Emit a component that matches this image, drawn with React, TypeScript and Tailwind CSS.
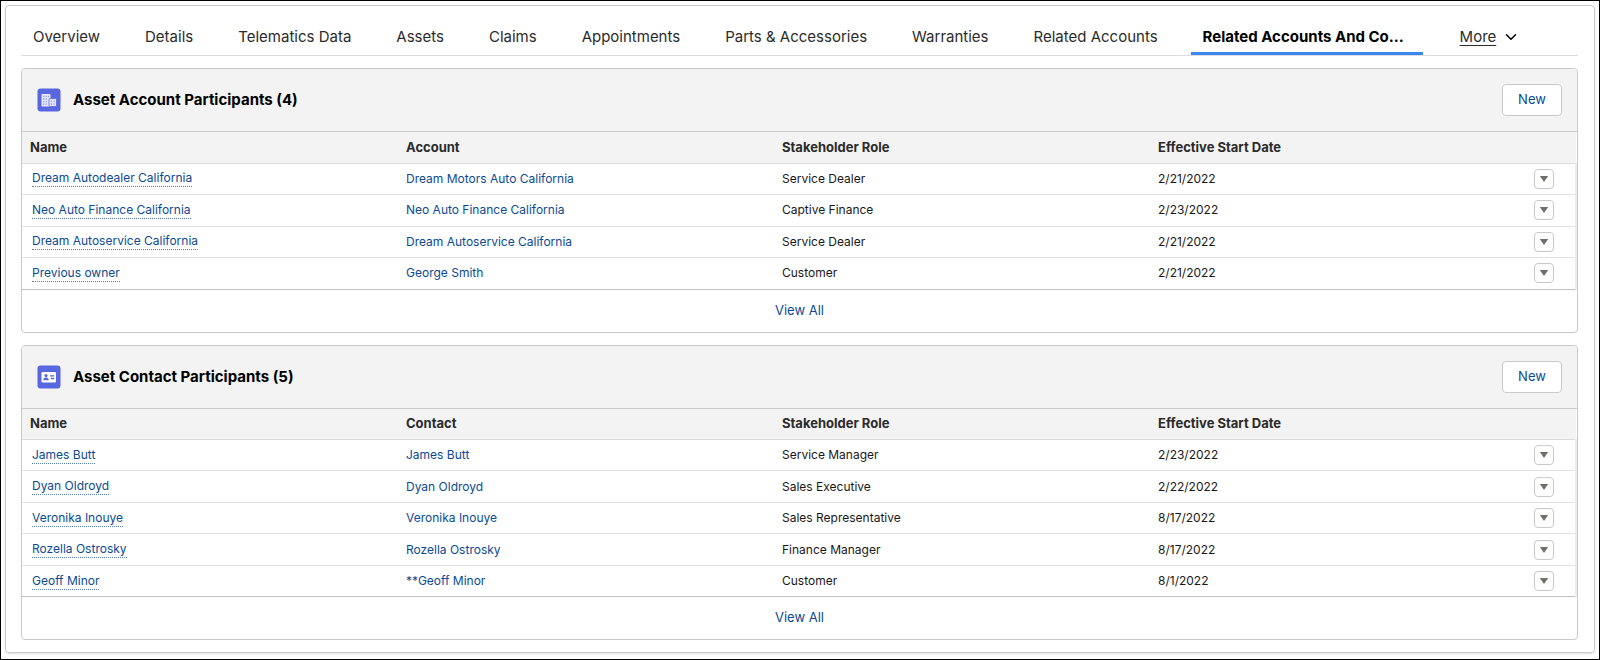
import React from "react";
import { ChevronDown } from "lucide-react";

const tabs = [
  "Overview",
  "Details",
  "Telematics Data",
  "Assets",
  "Claims",
  "Appointments",
  "Parts & Accessories",
  "Warranties",
  "Related Accounts",
];

type Row = { name: string; related: string; role: string; date: string };

const accounts: Row[] = [
  { name: "Dream Autodealer California", related: "Dream Motors Auto California", role: "Service Dealer", date: "2/21/2022" },
  { name: "Neo Auto Finance California", related: "Neo Auto Finance California", role: "Captive Finance", date: "2/23/2022" },
  { name: "Dream Autoservice California", related: "Dream Autoservice California", role: "Service Dealer", date: "2/21/2022" },
  { name: "Previous owner", related: "George Smith", role: "Customer", date: "2/21/2022" },
];

const contacts: Row[] = [
  { name: "James Butt", related: "James Butt", role: "Service Manager", date: "2/23/2022" },
  { name: "Dyan Oldroyd", related: "Dyan Oldroyd", role: "Sales Executive", date: "2/22/2022" },
  { name: "Veronika Inouye", related: "Veronika Inouye", role: "Sales Representative", date: "8/17/2022" },
  { name: "Rozella Ostrosky", related: "Rozella Ostrosky", role: "Finance Manager", date: "8/17/2022" },
  { name: "Geoff Minor", related: "**Geoff Minor", role: "Customer", date: "8/1/2022" },
];

const AccountIcon = () => (
  <svg viewBox="0 0 24 24" className="h-6 w-6 shrink-0" aria-hidden="true">
    <rect x="0.5" y="0.5" width="23" height="23" rx="3" fill="#5867e0" />
    <rect x="4.5" y="6" width="9" height="12.5" rx="0.8" fill="#e4e7fb" />
    <rect x="12" y="10.5" width="7.5" height="8" rx="0.8" fill="#e4e7fb" stroke="#5867e0" strokeWidth="0.8" />
    <path
      d="M6.2 8.4h1.2M8.5 8.4h1.2M10.8 8.4H12M6.2 11h1.2M8.5 11h1.2M6.2 13.6h1.2M8.5 13.6h1.2M6.2 16.2h1.2M8.5 16.2h1.2M13.8 13.2h1.2M16.4 13.2h1.2M13.8 16h1.2M16.4 16h1.2"
      stroke="#8d98ea"
      strokeWidth="1.3"
    />
  </svg>
);

const ContactIcon = () => (
  <svg viewBox="0 0 24 24" className="h-6 w-6 shrink-0" aria-hidden="true">
    <rect x="0.5" y="0.5" width="23" height="23" rx="3" fill="#5867e0" />
    <rect x="4.5" y="7" width="14.5" height="10.5" rx="1.3" fill="#fff" />
    <circle cx="9" cy="10.6" r="1.6" fill="#5867e0" />
    <path d="M6.2 15.2c0-1.8 1.2-2.6 2.8-2.6s2.8.8 2.8 2.6z" fill="#5867e0" />
    <path d="M13 10.9h4.2M13.8 13.5h3.4" stroke="#5867e0" strokeWidth="1.3" />
  </svg>
);

type RelatedListProps = {
  icon: React.ReactNode;
  title: string;
  relatedLabel: string;
  rows: Row[];
};

const RelatedList = ({ icon, title, relatedLabel, rows }: RelatedListProps) => (
  <section className="overflow-hidden rounded border border-[#c9c9c9] bg-white">
    {/* Header */}
    <header className="flex h-[63px] items-center gap-3 border-b border-[#c9c9c9] bg-[#f3f3f3] px-[15px]">
      {icon}
      <h2 className="flex-1 text-[15px] leading-6 font-bold text-black">{title}</h2>
      <button
        type="button"
        className="h-8 w-15 rounded border border-[#c9c9c9] bg-white text-[13px] text-[#0b4a94]"
      >
        New
      </button>
    </header>

    <table className="w-full table-fixed border-collapse text-left text-xs">
      <thead>
        <tr className="h-[31px] border-b border-[#dcdcdc] bg-[#f3f3f3] text-[13px] text-[#2b2b2b]">
          <th className="px-2 font-bold">Name</th>
          <th className="px-2 font-bold">{relatedLabel}</th>
          <th className="px-2 font-bold">Stakeholder Role</th>
          <th className="px-2 font-bold">Effective Start Date</th>
          <th className="w-[50px]" aria-label="Actions" />
        </tr>
      </thead>
      <tbody>
        {rows.map((row) => (
          <tr
            key={row.name}
            className="border-b border-[#e2e2e2] last:border-[#c0c0c0] odd:h-[31px] even:h-8"
          >
            <td className="px-2.5">
              <a href="#" className="inline-block border-b border-dotted border-[#0b4a94]/70 text-[#0b4a94]">
                {row.name}
              </a>
            </td>
            <td className="px-2">
              <a href="#" className="text-[#0b4a94]">{row.related}</a>
            </td>
            <td className="px-2 text-[#181818]">{row.role}</td>
            <td className="px-2 text-[#181818]">{row.date}</td>
            <td className="border-r-2 border-r-[#ececec] px-2">
              <button
                type="button"
                aria-label={`Actions for ${row.name}`}
                className="flex h-5 w-5 items-center justify-center rounded border border-[#c9c9c9] bg-white"
              >
                <svg viewBox="0 0 10 6" className="h-1.5 w-2.5" aria-hidden="true">
                  <path d="M0.8 0h8.4L5 6z" fill="#706e6b" />
                </svg>
              </button>
            </td>
          </tr>
        ))}
      </tbody>
    </table>

    {/* Footer */}
    <div className="flex h-[42px] items-center justify-center text-[13px]">
      <a href="#" className="text-[#0b4a94]">View All</a>
    </div>
  </section>
);

const App = () => {
  return (
    <div className="border border-black bg-white p-1 pb-1.5 font-['Inter','Liberation_Sans',sans-serif]">
      <main className="rounded border border-[#c9c9c9] pr-4 pb-3 pl-[15px] shadow-sm">
        {/* Tabs */}
        <nav className="flex h-[50px] items-end gap-[21px] border-b border-[#dddddd] text-[15px] text-[#2b2b2b]">
          {tabs.map((tab) => (
            <a key={tab} href="#" className="flex h-9 items-center whitespace-nowrap px-3">
              {tab}
            </a>
          ))}
          <a
            href="#"
            aria-current="page"
            className="flex h-9 w-[232px] items-center whitespace-nowrap border-b-3 border-[#3a87f0] px-3 pt-[3px] font-bold text-black"
          >
            Related Accounts And Co...
          </a>
          <button type="button" className="flex h-9 items-center gap-1.5 whitespace-nowrap px-4">
            <span className="underline underline-offset-3">More</span>
            <ChevronDown className="h-[18px] w-[18px] text-black" />
          </button>
        </nav>

        <div className="mt-3 flex flex-col gap-3">
          <RelatedList
            icon={<AccountIcon />}
            title="Asset Account Participants (4)"
            relatedLabel="Account"
            rows={accounts}
          />
          <RelatedList
            icon={<ContactIcon />}
            title="Asset Contact Participants (5)"
            relatedLabel="Contact"
            rows={contacts}
          />
        </div>
      </main>
    </div>
  );
};

export default App;
